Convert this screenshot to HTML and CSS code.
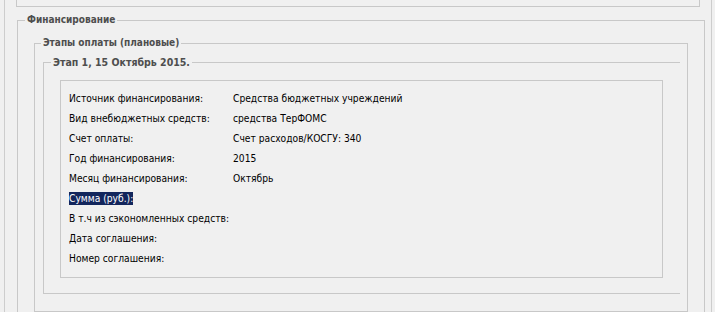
FILE: index.html
```html
<!DOCTYPE html>
<html lang="ru">
  <head>
    <meta charset="UTF-8" />
    <meta name="viewport" content="width=device-width, initial-scale=1.0" />
    <title>Финансирование</title>
    <link rel="stylesheet" href="styles.css">
  </head>
  <body>
    <div class="panel">
      <div class="topBox"></div>
      <fieldset class="finance">
        <legend>Финансирование</legend>
        <fieldset class="stages">
          <legend>Этапы оплаты (плановые)</legend>
          <fieldset class="stage">
            <legend>Этап 1, 15 Октябрь 2015.</legend>
            <div class="details">
              <div class="row">
                <span class="label">Источник финансирования:</span>
                <span class="value">Средства бюджетных учреждений</span>
              </div>
              <div class="row">
                <span class="label">Вид внебюджетных средств:</span>
                <span class="value">средства ТерФОМС</span>
              </div>
              <div class="row">
                <span class="label">Счет оплаты:</span>
                <span class="value">Счет расходов/КОСГУ: 340</span>
              </div>
              <div class="row">
                <span class="label">Год финансирования:</span>
                <span class="value">2015</span>
              </div>
              <div class="row">
                <span class="label">Месяц финансирования:</span>
                <span class="value">Октябрь</span>
              </div>
              <div class="row">
                <span class="label"><span class="selected">Сумма (руб.):</span></span>
                <span class="value"></span>
              </div>
              <div class="row">
                <span class="label">В т.ч из сэкономленных средств:</span>
                <span class="value"></span>
              </div>
              <div class="row">
                <span class="label">Дата соглашения:</span>
                <span class="value"></span>
              </div>
              <div class="row">
                <span class="label">Номер соглашения:</span>
                <span class="value"></span>
              </div>
            </div>
          </fieldset>
        </fieldset>
      </fieldset>
    </div>
  </body>
</html>
```

FILE: styles.css
```css
body {
  margin: 0;
  height: 312px;
  overflow: hidden;
  background-color: #f0f0f0;
  font-family: "DejaVu Sans Condensed", "Liberation Sans", Arial, sans-serif;
  font-size: 10.2px;
  color: #000;
}

.panel {
  margin: 0 3px 0 4px;
  height: 312px;
  border-left: 1px solid #cdcdcd;
  border-right: 1px solid #cdcdcd;
}

.topBox {
  margin: 0 11px 0 11px;
  height: 6px;
  border: 1px solid #c8c8c8;
  border-top: none;
}

fieldset {
  margin: 0;
  min-width: 0;
  border: 1px solid #c8c8c8;
}

legend {
  padding: 0 2px;
  line-height: 14px;
  font-size: 10px;
  font-weight: bold;
  color: #4e4e4e;
}

.finance {
  margin: 6px 6px 0 12px;
  padding: 9px 16px 0 16px;
}

.finance > legend {
  margin-left: -9px;
}

.stages {
  padding: 5px 7px 17px 8px;
}

.stages > legend {
  margin-left: -2px;
}

.stage {
  border-right: none;
  padding: 11px 17px 15px 16px;
}

.stage > legend {
  margin-left: -9px;
  font-size: 10.5px;
}

.details {
  border: 1px solid #c8c8c8;
  padding: 7px 8px 9px;
}

.row {
  display: grid;
  grid-template-columns: 164px 1fr;
  align-items: center;
  height: 20px;
}

.label {
  white-space: nowrap;
}

.selected {
  display: inline-block;
  line-height: 13px;
  background-color: #13265c;
  color: #fff;
}
```
